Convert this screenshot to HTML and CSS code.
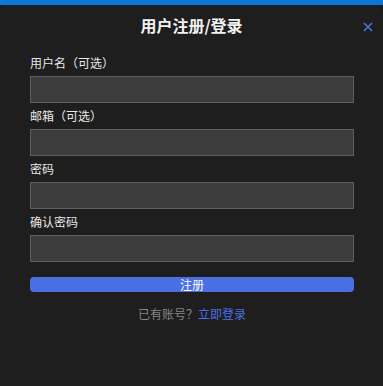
FILE: index.html
```html
<!DOCTYPE html>
<html lang="zh-CN">
<head>
    <meta charset="UTF-8">
    <title>用户注册/登录</title>
    <link rel="stylesheet" href="styles.css">
</head>
<body>
<div class="top-strip"></div>
<div class="dialog">
    <div class="dialog-header">
        <div class="dialog-title">用户注册/登录</div>
        <div class="dialog-close">
            <svg width="10" height="10" viewBox="0 0 10 10">
                <path d="M1 1 L9 9 M9 1 L1 9" stroke="#5470dc" stroke-width="1.6" fill="none"/>
            </svg>
        </div>
    </div>
    <div class="dialog-body">
        <div class="field">
            <div class="field-label">用户名（可选）</div>
            <input class="field-input" type="text">
        </div>
        <div class="field">
            <div class="field-label">邮箱（可选）</div>
            <input class="field-input" type="text">
        </div>
        <div class="field">
            <div class="field-label">密码</div>
            <input class="field-input" type="password">
        </div>
        <div class="field">
            <div class="field-label">确认密码</div>
            <input class="field-input" type="password">
        </div>
        <div class="submit-button">注册</div>
        <div class="switch-line">已有账号？<a class="switch-link" href="#">立即登录</a></div>
    </div>
</div>
</body>
</html>
```

FILE: styles.css
```css
body {
    margin: 0;
    background: #1a1a1a;
    font-family: "Noto Sans CJK SC", "Noto Sans", sans-serif;
    color: #e6e6e6;
    height: 386px;
    overflow: hidden;
}

.top-strip {
    height: 5px;
    background: #0a78d7;
}

.dialog {
    background: #1e1e1e;
    border-radius: 8px 8px 0 0;
    height: 381px;
}

.dialog-header {
    position: relative;
    box-sizing: border-box;
    height: 44px;
    padding-bottom: 5px;
    display: flex;
    align-items: center;
    justify-content: center;
}

.dialog-title {
    font-size: 16px;
    line-height: 22px;
    font-weight: bold;
    color: #f2f2f2;
}

.dialog-close {
    position: absolute;
    right: 10px;
    top: 17px;
    width: 10px;
    height: 10px;
}

.dialog-close svg {
    display: block;
}

.dialog-body {
    padding: 6px 29px 0 30px;
}

.field {
    margin-bottom: 5px;
}

.field-label {
    height: 16px;
    font-size: 12px;
    line-height: 16px;
    margin-bottom: 5px;
    color: #e8e8e8;
}

.field-input {
    display: block;
    box-sizing: border-box;
    width: 100%;
    height: 27px;
    margin: 0;
    background: #3c3c3c;
    border: 1px solid #5e5e5e;
    outline: none;
    color: #e6e6e6;
}

.submit-button {
    margin-top: 15px;
    height: 15px;
    line-height: 15px;
    background: #4a6fe3;
    border-radius: 4px;
    color: #ffffff;
    font-size: 12px;
    text-align: center;
}

.switch-line {
    margin-top: 14px;
    font-size: 12px;
    line-height: 16px;
    text-align: center;
    color: #858585;
}

.switch-link {
    color: #4a6fe3;
    text-decoration: none;
}
```
